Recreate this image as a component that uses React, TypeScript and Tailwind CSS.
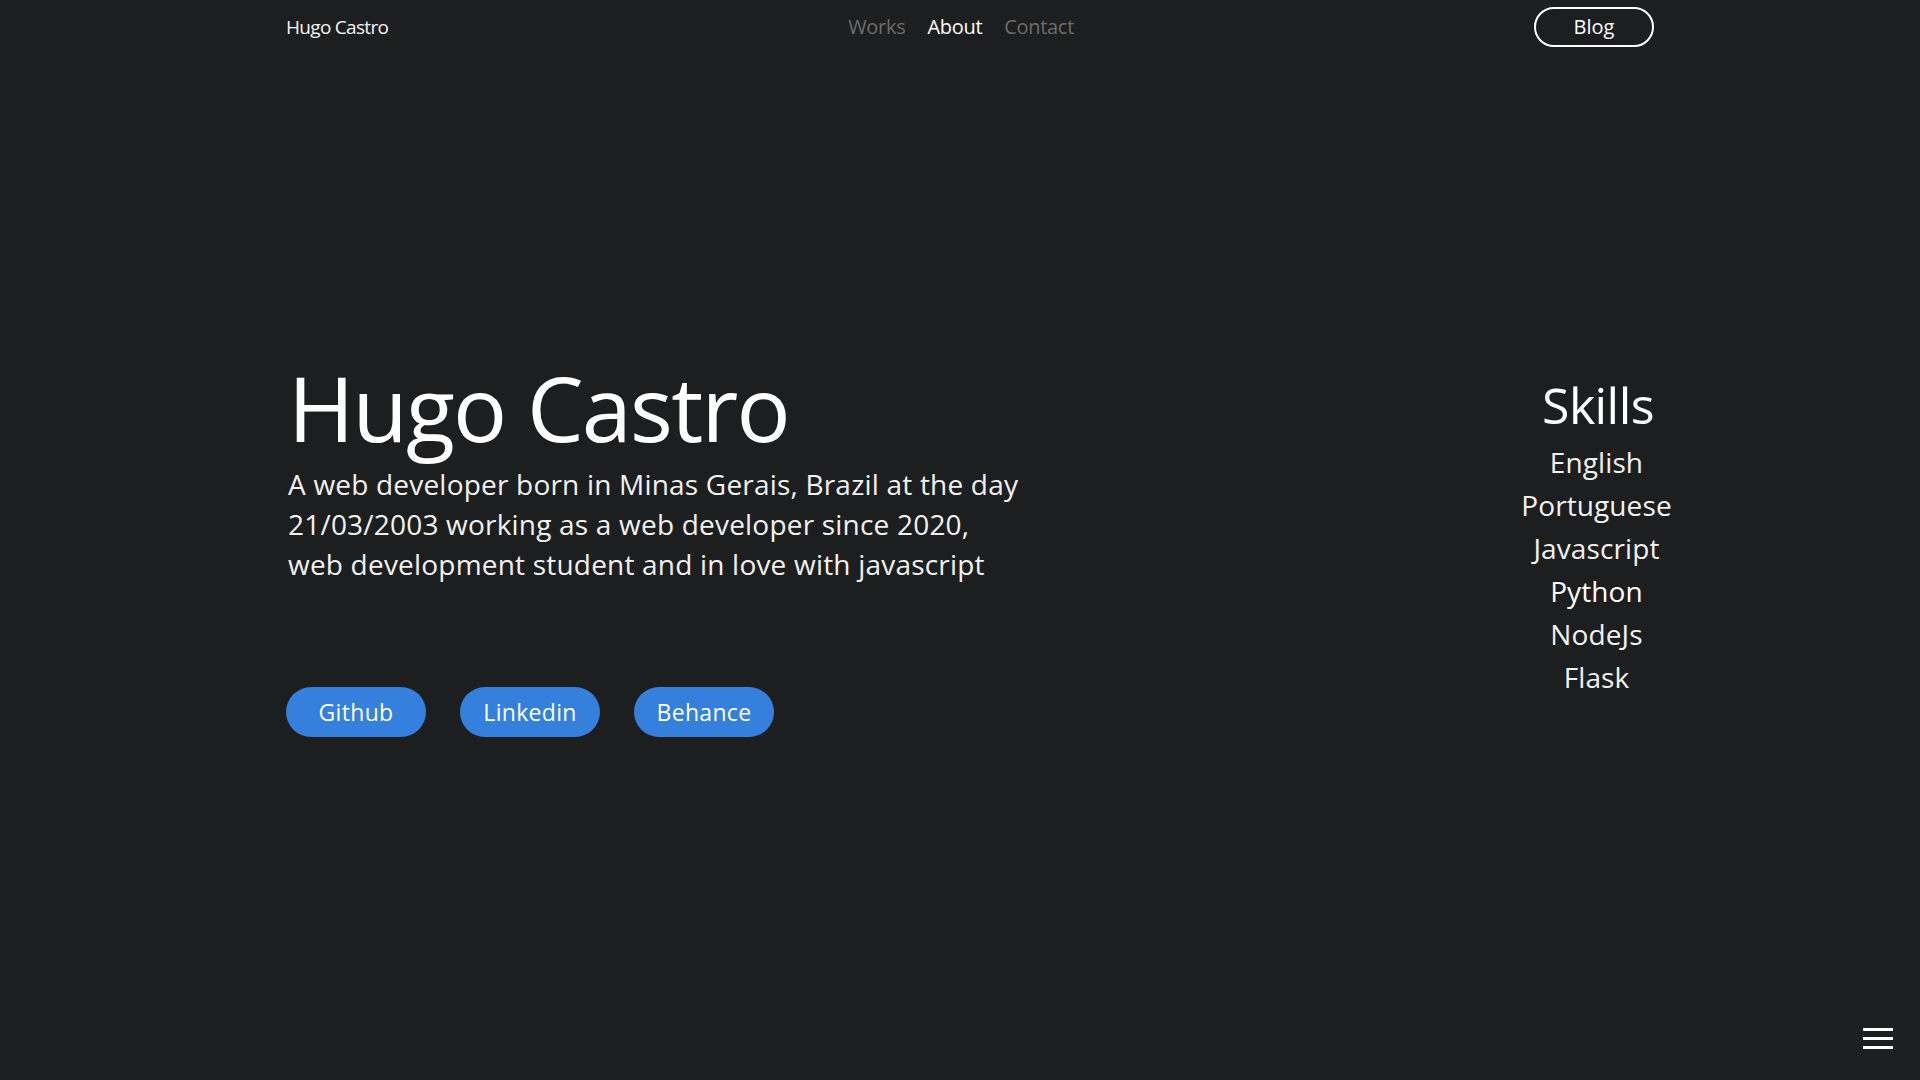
import React from "react";

const font = { fontFamily: '"Open Sans", "Noto Sans", sans-serif' };

export default function App() {
  const skills = ["English", "Portuguese", "Javascript", "Python", "NodeJs", "Flask"];
  return (
    <div className="relative h-[1080px] w-full overflow-hidden bg-[#1d1e20] text-white" style={font}>
      <header className="flex items-center justify-between pl-[286px] pr-[266px] pt-[7px]">
        <div className="text-[19px] leading-[40px] tracking-[-0.7px] text-[#f5f5f5]">Hugo Castro</div>
        <nav className="flex items-center gap-[22px] text-[20px] leading-[40px] tracking-[-0.3px]">
          <a className="text-[#6c6c6c]">Works</a>
          <a className="text-white">About</a>
          <a className="text-[#6c6c6c]">Contact</a>
        </nav>
        <button className="flex h-[40px] w-[120px] items-center justify-center rounded-full border-2 border-white text-[20px] text-white">
          Blog
        </button>
      </header>

      <main className="mt-[313px] flex items-start justify-between pl-[286px] pr-[222px]">
        <section className="flex flex-col">
          <h1 className="pl-[2px] text-[90px] leading-[94px] font-normal tracking-[-1.8px] text-white">Hugo Castro</h1>
          <p className="mt-[10px] whitespace-nowrap pl-[2px] text-[28px] leading-[40px] tracking-[0.2px] text-[#f2f2f2]">
            A web developer born in Minas Gerais, Brazil at the day
            <br />
            21/03/2003 working as a web developer since 2020,
            <br />
            web development student and in love with javascript
          </p>
          <div className="mt-[103px] flex gap-[34px]">
            {["Github", "Linkedin", "Behance"].map((b) => (
              <button
                key={b}
                className="flex h-[50px] w-[140px] items-center justify-center rounded-full bg-[#3580dd] text-[23px] tracking-[0.3px] text-white"
              >
                {b}
              </button>
            ))}
          </div>
        </section>
        <aside className="mt-[20px] flex w-[200px] flex-col items-center">
          <h2 className="text-[50px] leading-[50px] tracking-[-0.6px] text-white">Skills</h2>
          <ul className="mt-[11px] flex flex-col items-center pr-[3px] text-[28px] leading-[43px] tracking-[0.1px] text-[#f2f2f2]">
            {skills.map((s) => (
              <li key={s} className={s === "Python" ? "font-medium text-white" : ""}>
                {s}
              </li>
            ))}
          </ul>
        </aside>
      </main>

      <button className="absolute bottom-[31px] right-[27px] flex w-[30px] flex-col gap-[6px]">
        <span className="block h-[3px] w-[30px] bg-white" />
        <span className="block h-[3px] w-[30px] bg-white" />
        <span className="block h-[3px] w-[30px] bg-white" />
      </button>
    </div>
  );
}
